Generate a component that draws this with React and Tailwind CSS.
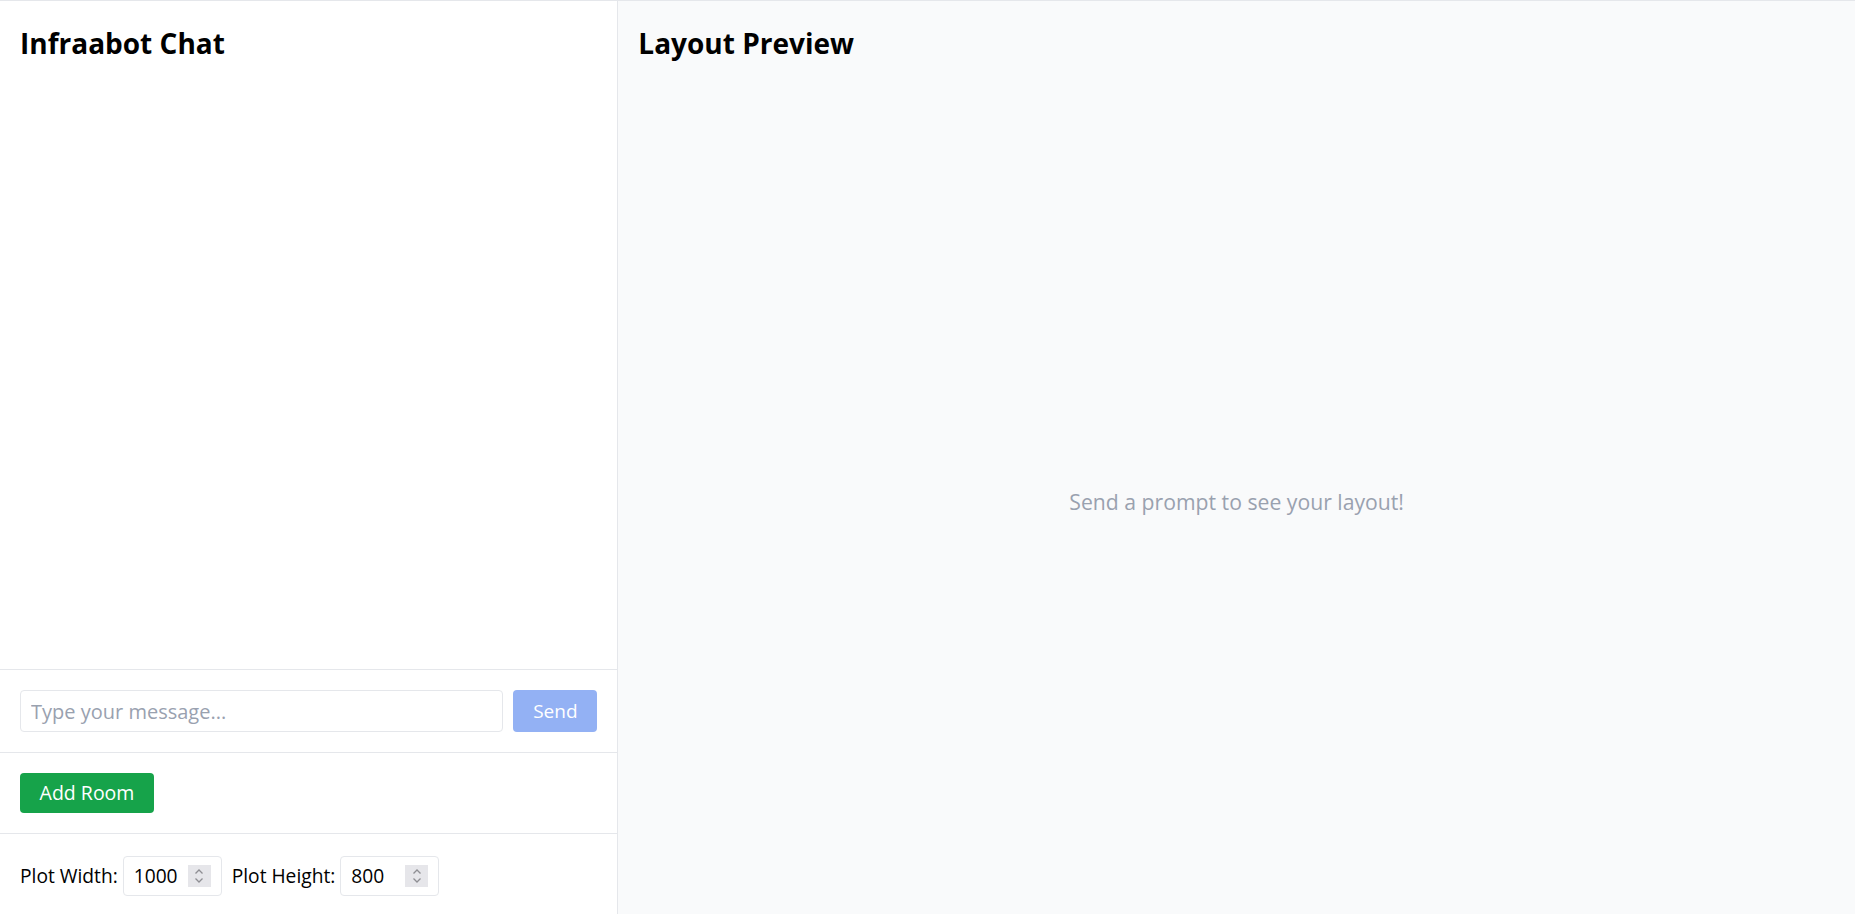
import { useState } from "react";

function Spinner() {
   return (
      <div className="flex h-[22px] w-[23px] flex-col items-center justify-center bg-[#e6e6ea]">
         <svg width="12" height="18" viewBox="0 0 12 18" fill="none" stroke="#8e8e93" strokeWidth="1.3">
            <path d="M2.5 6.5 L6 3 L9.5 6.5" />
            <path d="M2.5 11.5 L6 15 L9.5 11.5" />
         </svg>
      </div>
   );
}

function NumberBox({ value }) {
   return (
      <div className="flex h-10 w-[99px] items-center justify-between rounded border border-gray-200 bg-white pl-[10px] pr-[10px]">
         <span className="text-[19.2px] text-black">{value}</span>
         <Spinner />
      </div>
   );
}

function App() {
   const [message, setMessage] = useState("");

   return (
      <div
         className="flex h-[914px] w-full border-t border-gray-200 text-black"
         style={{ fontFamily: '"Open Sans", "Noto Sans", sans-serif' }}
      >
         {/* chat panel */}
         <div className="flex w-1/3 flex-col border-r border-gray-200 bg-white">
            <div className="px-5 pt-6 pb-4">
               <h2 className="text-[28px] font-bold leading-9">Infraabot Chat</h2>
            </div>

            <div className="flex-1"></div>

            <div className="flex gap-[10px] border-t border-gray-200 p-5">
               <input
                  type="text"
                  value={message}
                  onChange={(e) => setMessage(e.target.value)}
                  placeholder="Type your message..."
                  className="h-[42px] flex-1 rounded border border-gray-200 px-[10px] text-[20px] placeholder-gray-400 outline-none"
               />
               <button
                  disabled={!message}
                  className="h-[42px] w-[84px] rounded bg-[#93b1f4] text-[19px] text-white"
               >
                  Send
               </button>
            </div>

            <div className="border-t border-gray-200 p-5">
               <button className="h-10 w-[134px] rounded bg-[#16a34a] text-[19.5px] text-white">
                  Add Room
               </button>
            </div>

            <div className="flex items-center border-t border-gray-200 px-5 pt-[22px] pb-[18px] text-[19.2px]">
               <span className="mr-[5px]">Plot Width:</span>
               <NumberBox value="1000" />
               <span className="ml-[10px] mr-[5px]">Plot Height:</span>
               <NumberBox value="800" />
            </div>
         </div>

         {/* preview panel */}
         <div className="flex flex-1 flex-col bg-gray-50">
            <div className="px-5 pt-6 pb-4">
               <h2 className="text-[28px] font-bold leading-9">Layout Preview</h2>
            </div>
            <div className="flex flex-1 items-center justify-center">
               <p className="pt-3 text-[21.2px] text-gray-400">Send a prompt to see your layout!</p>
            </div>
         </div>
      </div>
   );
}

export default App;
